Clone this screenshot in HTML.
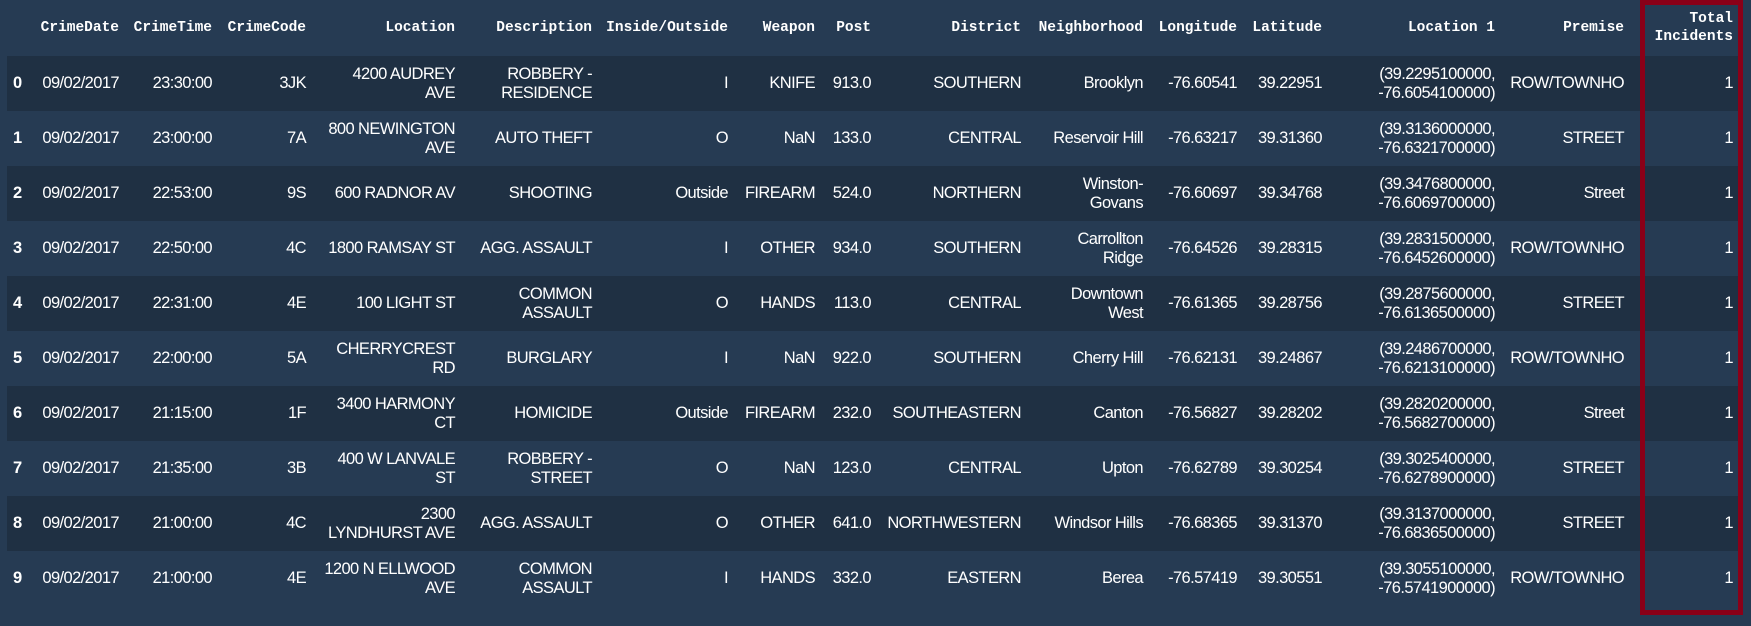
<!DOCTYPE html>
<html><head><meta charset="utf-8"><style>
body{margin:0;width:1751px;height:626px;background:#263b53;overflow:hidden;position:relative;font-family:"Liberation Sans",Arial,sans-serif;color:#fff}
table{position:absolute;left:7px;top:0;border-collapse:collapse;table-layout:fixed;width:1736px}
td,th{padding:0;text-align:right;vertical-align:middle;font-size:16.5px;letter-spacing:-0.6px;line-height:19px}
th{font-family:"Liberation Mono",monospace;font-weight:bold;font-size:14.5px;letter-spacing:0;height:56px;line-height:18px}
tbody tr{height:55px}
tbody tr:nth-child(odd){background:#1f3043}
tbody tr:nth-child(even){background:#263b53}
td.i{text-align:left;padding-left:6px;font-weight:bold}
.loc{padding-left:18px}.des{padding-left:25px}.nb{padding-left:20px}.l1{padding-left:35px}.tot{padding-left:20px}
.box{position:absolute;left:1640px;top:0;width:93px;height:605px;border:5px solid #8a0018}
</style></head><body>
<table>
<colgroup><col style="width:18px"><col style="width:94px"><col style="width:93px"><col style="width:94px"><col style="width:149px"><col style="width:137px"><col style="width:136px"><col style="width:87px"><col style="width:56px"><col style="width:150px"><col style="width:122px"><col style="width:94px"><col style="width:85px"><col style="width:173px"><col style="width:129px"><col style="width:109px"><col style="width:10px"></colgroup>
<thead><tr><th></th><th>CrimeDate</th><th>CrimeTime</th><th>CrimeCode</th><th class="loc">Location</th><th>Description</th><th>Inside/Outside</th><th>Weapon</th><th>Post</th><th>District</th><th>Neighborhood</th><th>Longitude</th><th>Latitude</th><th class="l1">Location 1</th><th>Premise</th><th class="tot">Total Incidents</th><th></th></tr></thead>
<tbody>
<tr><td class="i">0</td><td>09/02/2017</td><td>23:30:00</td><td>3JK</td><td class="loc">4200 AUDREY AVE</td><td class="des">ROBBERY - RESIDENCE</td><td>I</td><td>KNIFE</td><td>913.0</td><td>SOUTHERN</td><td class="nb">Brooklyn</td><td>-76.60541</td><td>39.22951</td><td class="l1">(39.2295100000, -76.6054100000)</td><td>ROW/TOWNHO</td><td>1</td><td></td></tr>
<tr><td class="i">1</td><td>09/02/2017</td><td>23:00:00</td><td>7A</td><td class="loc">800 NEWINGTON AVE</td><td class="des">AUTO THEFT</td><td>O</td><td>NaN</td><td>133.0</td><td>CENTRAL</td><td class="nb">Reservoir Hill</td><td>-76.63217</td><td>39.31360</td><td class="l1">(39.3136000000, -76.6321700000)</td><td>STREET</td><td>1</td><td></td></tr>
<tr><td class="i">2</td><td>09/02/2017</td><td>22:53:00</td><td>9S</td><td class="loc">600 RADNOR AV</td><td class="des">SHOOTING</td><td>Outside</td><td>FIREARM</td><td>524.0</td><td>NORTHERN</td><td class="nb">Winston-Govans</td><td>-76.60697</td><td>39.34768</td><td class="l1">(39.3476800000, -76.6069700000)</td><td>Street</td><td>1</td><td></td></tr>
<tr><td class="i">3</td><td>09/02/2017</td><td>22:50:00</td><td>4C</td><td class="loc">1800 RAMSAY ST</td><td class="des">AGG. ASSAULT</td><td>I</td><td>OTHER</td><td>934.0</td><td>SOUTHERN</td><td class="nb">Carrollton Ridge</td><td>-76.64526</td><td>39.28315</td><td class="l1">(39.2831500000, -76.6452600000)</td><td>ROW/TOWNHO</td><td>1</td><td></td></tr>
<tr><td class="i">4</td><td>09/02/2017</td><td>22:31:00</td><td>4E</td><td class="loc">100 LIGHT ST</td><td class="des">COMMON ASSAULT</td><td>O</td><td>HANDS</td><td>113.0</td><td>CENTRAL</td><td class="nb">Downtown West</td><td>-76.61365</td><td>39.28756</td><td class="l1">(39.2875600000, -76.6136500000)</td><td>STREET</td><td>1</td><td></td></tr>
<tr><td class="i">5</td><td>09/02/2017</td><td>22:00:00</td><td>5A</td><td class="loc">CHERRYCREST RD</td><td class="des">BURGLARY</td><td>I</td><td>NaN</td><td>922.0</td><td>SOUTHERN</td><td class="nb">Cherry Hill</td><td>-76.62131</td><td>39.24867</td><td class="l1">(39.2486700000, -76.6213100000)</td><td>ROW/TOWNHO</td><td>1</td><td></td></tr>
<tr><td class="i">6</td><td>09/02/2017</td><td>21:15:00</td><td>1F</td><td class="loc">3400 HARMONY CT</td><td class="des">HOMICIDE</td><td>Outside</td><td>FIREARM</td><td>232.0</td><td>SOUTHEASTERN</td><td class="nb">Canton</td><td>-76.56827</td><td>39.28202</td><td class="l1">(39.2820200000, -76.5682700000)</td><td>Street</td><td>1</td><td></td></tr>
<tr><td class="i">7</td><td>09/02/2017</td><td>21:35:00</td><td>3B</td><td class="loc">400 W LANVALE ST</td><td class="des">ROBBERY - STREET</td><td>O</td><td>NaN</td><td>123.0</td><td>CENTRAL</td><td class="nb">Upton</td><td>-76.62789</td><td>39.30254</td><td class="l1">(39.3025400000, -76.6278900000)</td><td>STREET</td><td>1</td><td></td></tr>
<tr><td class="i">8</td><td>09/02/2017</td><td>21:00:00</td><td>4C</td><td class="loc">2300 LYNDHURST AVE</td><td class="des">AGG. ASSAULT</td><td>O</td><td>OTHER</td><td>641.0</td><td>NORTHWESTERN</td><td class="nb">Windsor Hills</td><td>-76.68365</td><td>39.31370</td><td class="l1">(39.3137000000, -76.6836500000)</td><td>STREET</td><td>1</td><td></td></tr>
<tr><td class="i">9</td><td>09/02/2017</td><td>21:00:00</td><td>4E</td><td class="loc">1200 N ELLWOOD AVE</td><td class="des">COMMON ASSAULT</td><td>I</td><td>HANDS</td><td>332.0</td><td>EASTERN</td><td class="nb">Berea</td><td>-76.57419</td><td>39.30551</td><td class="l1">(39.3055100000, -76.5741900000)</td><td>ROW/TOWNHO</td><td>1</td><td></td></tr>
</tbody></table>
<div class="box"></div>
</body></html>
